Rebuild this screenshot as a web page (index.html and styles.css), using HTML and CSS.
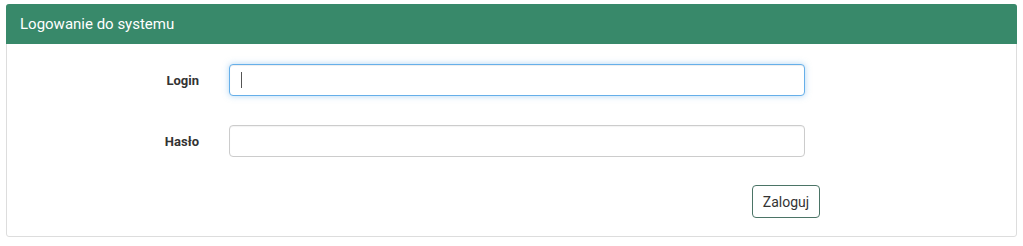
FILE: index.html
```html
<!DOCTYPE html>
<html lang="pl">
<head>
  <meta charset="UTF-8">
  <title>Logowanie do systemu</title>
  <link rel="stylesheet" href="styles.css">
</head>
<body>
  <div class="panel">
    <div class="panel-heading">Logowanie do systemu</div>
    <form class="panel-body">
      <div class="form-row">
        <label class="form-label" for="login">Login</label>
        <div class="input-wrap">
          <input id="login" class="form-input focused" type="text">
          <span class="caret"></span>
        </div>
      </div>
      <div class="form-row">
        <label class="form-label" for="haslo">Hasło</label>
        <div class="input-wrap">
          <input id="haslo" class="form-input" type="password">
        </div>
      </div>
      <div class="form-actions">
        <button type="button" class="btn">Zaloguj</button>
      </div>
    </form>
  </div>
</body>
</html>
```

FILE: styles.css
```css
:root {
  --header-color: #38896a;
  --border-color: #dddddd;
  --input-border: #cccccc;
  --focus-border: #66afe9;
  --text-color: #333333;
}

body {
  margin: 0;
  padding: 4px 6px 0 6px;
  font-family: Roboto, "Liberation Sans", Arial, sans-serif;
  color: var(--text-color);
  background-color: #ffffff;
}

.panel {
  border: 1px solid var(--border-color);
  border-radius: 3px;
  background-color: #ffffff;
}

.panel-heading {
  background-color: var(--header-color);
  color: #ffffff;
  font-size: 15px;
  height: 40px;
  line-height: 40px;
  padding: 0 14px;
  margin: -1px -1px 0 -1px;
  border-radius: 3px 3px 0 0;
}

.panel-body {
  margin: 0;
  padding: 20px 0 18px 0;
}

.form-row {
  display: grid;
  grid-template-columns: 192px 576px;
  column-gap: 30px;
  align-items: center;
  margin-bottom: 28px;
}

.form-row:first-child {
  margin-bottom: 29px;
}

.form-label {
  text-align: right;
  font-weight: bold;
  font-size: 13px;
}

.input-wrap {
  position: relative;
}

.form-input {
  display: block;
  width: 100%;
  box-sizing: border-box;
  height: 32px;
  border: 1px solid var(--input-border);
  border-radius: 4px;
  padding: 6px 12px;
  font-size: 14px;
  outline: none;
  box-shadow: inset 0 1px 1px rgba(0,0,0,0.05);
}

.form-input.focused {
  border-color: var(--focus-border);
  box-shadow: inset 0 1px 1px rgba(0,0,0,0.075), 0 0 6px rgba(102,175,233,0.5);
}

.caret {
  position: absolute;
  left: 12px;
  top: 8px;
  width: 1px;
  height: 16px;
  background-color: #555555;
}

.form-actions {
  display: flex;
  justify-content: flex-end;
  width: 813px;
}

.btn {
  font-family: Roboto, "Liberation Sans", Arial, sans-serif;
  font-size: 14px;
  color: #333333;
  background-color: #ffffff;
  border: 1px solid #4b7466;
  border-radius: 4px;
  height: 33px;
  width: 68px;
  padding: 0;
  cursor: pointer;
}
```
